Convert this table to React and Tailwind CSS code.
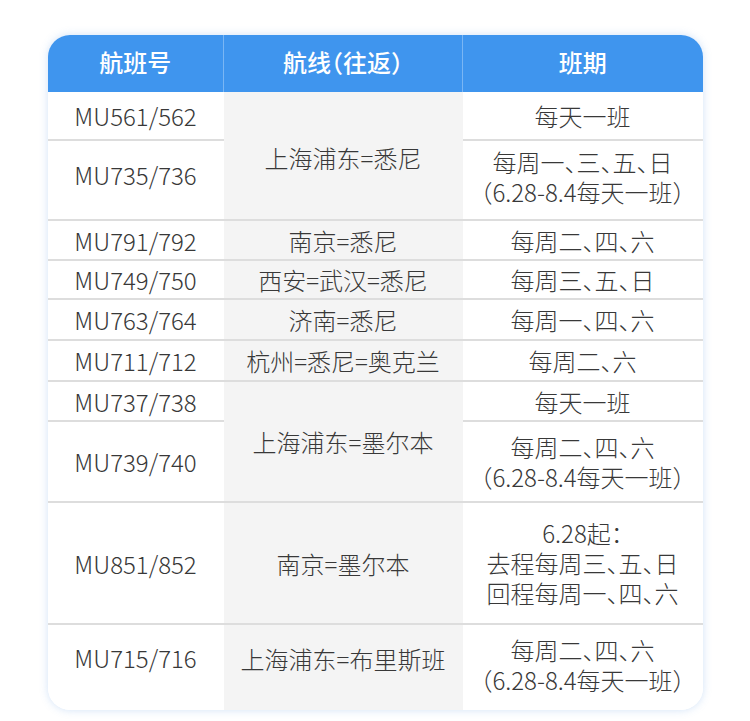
const rows = [
  { flight: "MU561/562", h: "h-[48px]", route: "上海浦东=悉尼", routePad: "pt-[4px]", span: 2, schedule: ["每天一班"] },
  { flight: "MU735/736", h: "h-[80px]", flightPad: "pb-[12px]", schedPad: "pb-[6px]", schedule: ["每周一、三、五、日", "（6.28-8.4每天一班）"] },
  { flight: "MU791/792", h: "h-[40px]", route: "南京=悉尼", span: 1, schedule: ["每周二、四、六"] },
  { flight: "MU749/750", h: "h-[39px]", route: "西安=武汉=悉尼", span: 1, schedule: ["每周三、五、日"] },
  { flight: "MU763/764", h: "h-[41px]", route: "济南=悉尼", span: 1, schedule: ["每周一、四、六"] },
  { flight: "MU711/712", h: "h-[41px]", route: "杭州=悉尼=奥克兰", span: 1, schedule: ["每周二、六"] },
  { flight: "MU737/738", h: "h-[40px]", route: "上海浦东=墨尔本", span: 2, schedule: ["每天一班"] },
  { flight: "MU739/740", h: "h-[81px]", schedule: ["每周二、四、六", "（6.28-8.4每天一班）"] },
  { flight: "MU851/852", h: "h-[122px]", route: "南京=墨尔本", span: 1, schedule: ["6.28起：", "去程每周三、五、日", "回程每周一、四、六"] },
  { flight: "MU715/716", h: "h-[86px]", flightPad: "pb-[20px]", routePad: "pb-[18px]", schedPad: "pb-[6px]", route: "上海浦东=布里斯班", span: 1, schedule: ["每周二、四、六", "（6.28-8.4每天一班）"], last: true },
];

export default function App() {
  return (
    <div
      className="min-h-[721px] w-[750px] bg-white pt-[35px]"
      style={{ fontFamily: '"Noto Sans CJK SC", "Noto Sans", sans-serif' }}
    >
      <div className="mx-auto w-[655px] overflow-hidden rounded-[22px] bg-white shadow-[0_0_8px_rgba(90,150,225,0.28)]">
        <table className="w-full table-fixed border-collapse text-center text-[24px] font-light leading-[31px] text-[#383838] [font-feature-settings:'halt']">
          <colgroup>
            <col className="w-[176px]" />
            <col className="w-[239px]" />
            <col className="w-[240px]" />
          </colgroup>
          <thead>
            <tr className="h-[57px] bg-[#3f95ee] text-[24px] text-white">
              <th className="border-r border-[#7ab6f4] pb-[4px] font-medium">航班号</th>
              <th className="border-r border-[#7ab6f4] pb-[4px] font-medium">航线（往返）</th>
              <th className="pb-[4px] font-medium">班期</th>
            </tr>
          </thead>
          <tbody>
            {rows.map((row) => {
              const line = row.last ? "" : "border-b-2 border-[#dddddd]";
              const multi = row.schedule.length > 1 ? "leading-[30px]" : "";
              return (
                <tr key={row.flight} className={row.h}>
                  <td className={`${line} bg-white ${row.flightPad || ""}`}>{row.flight}</td>
                  {row.route ? (
                    <td rowSpan={row.span} className={`${line} bg-[#f4f4f4] ${row.routePad || ""}`}>
                      {row.route}
                    </td>
                  ) : null}
                  <td className={`${line} bg-white ${multi} ${row.schedPad || ""}`}>
                    {row.schedule.map((text) => (
                      <div key={text}>{text}</div>
                    ))}
                  </td>
                </tr>
              );
            })}
          </tbody>
        </table>
      </div>
    </div>
  );
}
